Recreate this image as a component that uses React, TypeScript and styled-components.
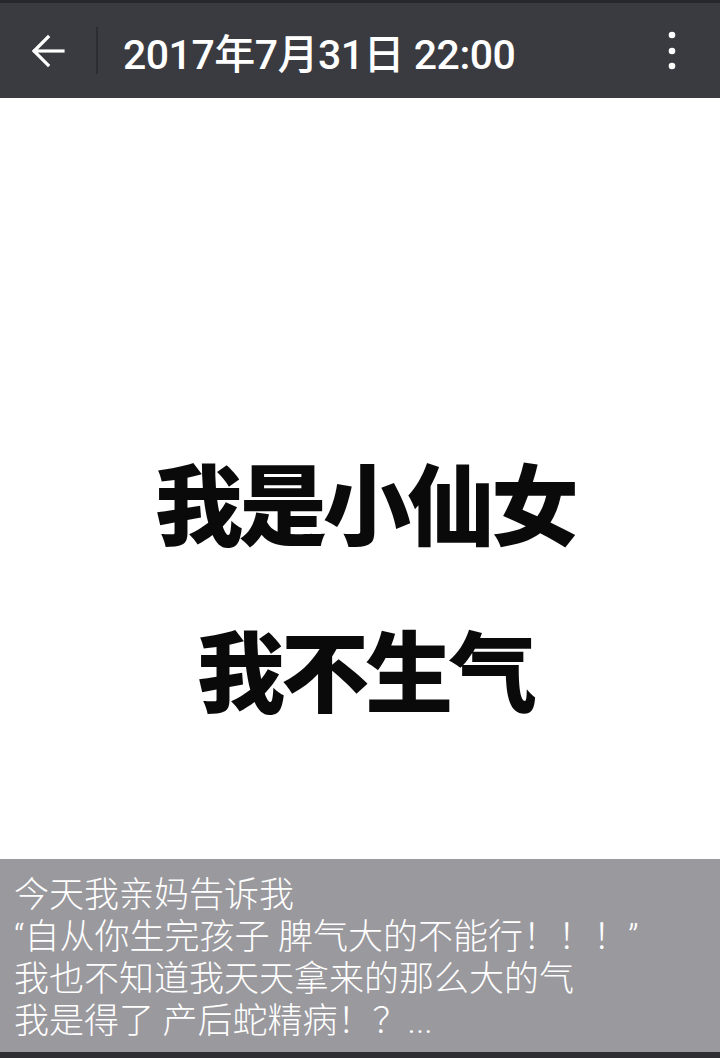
import React from 'react';
import styled, { createGlobalStyle } from 'styled-components';

const GlobalStyle = createGlobalStyle`
  html, body {
    margin: 0;
    padding: 0;
    background: #ffffff;
  }
`;

const Screen = styled.div`
  width: 720px;
  height: 1058px;
  display: flex;
  flex-direction: column;
  overflow: hidden;
  font-family: Roboto, "Noto Sans CJK SC", sans-serif;
  background: #ffffff;
`;

const StatusStrip = styled.div`
  height: 3px;
  background: #27282b;
`;

const Toolbar = styled.header`
  height: 95px;
  display: flex;
  align-items: center;
  background: #3a3b40;
  color: #ffffff;
`;

const IconButton = styled.button`
  width: 96px;
  height: 100%;
  display: flex;
  align-items: center;
  justify-content: center;
  background: transparent;
  border: none;
  padding: 0;
  color: inherit;
`;

const Divider = styled.div`
  width: 2px;
  height: 47px;
  background: #2c2d31;
`;

const Title = styled.h1`
  flex: 1;
  margin: 0 0 0 25px;
  font-size: 41px;
  font-weight: 500;
  letter-spacing: -0.5px;
  white-space: nowrap;
`;

const Canvas = styled.main`
  flex: 1;
  display: flex;
  flex-direction: column;
  align-items: center;
  gap: 76px;
  padding: 356px 0 0 10px;
  background: #ffffff;
`;

const BigLine = styled.div`
  font-family: "Noto Sans CJK SC", sans-serif;
  font-size: 88px;
  font-weight: 900;
  line-height: 91px;
  color: #0a0a0a;
  letter-spacing: -4px;
`;

const Caption = styled.footer`
  height: 193px;
  padding: 16px 14px 0;
  box-sizing: border-box;
  background: #9a999e;
  color: #ffffff;
  font-family: Roboto, "Noto Sans CJK SC", sans-serif;
  font-size: 35px;
  font-weight: 300;
  line-height: 42px;
`;

const CaptionLine = styled.div`
  white-space: nowrap;
`;

const BottomStrip = styled.div`
  height: 6px;
  background: #2e2e32;
`;

const lines = [
  '今天我亲妈告诉我',
  '“自从你生完孩子 脾气大的不能行！！！”',
  '我也不知道我天天拿来的那么大的气',
  '我是得了 产后蛇精病！？...',
];

export default function App() {
  return (
    <Screen>
      <GlobalStyle />
      <StatusStrip />
      <Toolbar>
        <IconButton aria-label="back">
          <svg width="36" height="36" viewBox="0 0 36 36" fill="none" stroke="#fff" strokeWidth="3.2" strokeLinecap="square">
            <path d="M33 18H5" />
            <path d="M18 4L4 18l14 14" />
          </svg>
        </IconButton>
        <Divider />
        <Title>2017年7月31日 22:00</Title>
        <IconButton aria-label="menu">
          <svg width="10" height="40" viewBox="0 0 10 40" fill="#fff">
            <circle cx="5" cy="4" r="3.3" />
            <circle cx="5" cy="20" r="3.3" />
            <circle cx="5" cy="35" r="3.3" />
          </svg>
        </IconButton>
      </Toolbar>
      <Canvas>
        <BigLine>我是小仙女</BigLine>
        <BigLine>我不生气</BigLine>
      </Canvas>
      <Caption>
        {lines.map((l, i) => (
          <CaptionLine key={i}>{l}</CaptionLine>
        ))}
      </Caption>
      <BottomStrip />
    </Screen>
  );
}
